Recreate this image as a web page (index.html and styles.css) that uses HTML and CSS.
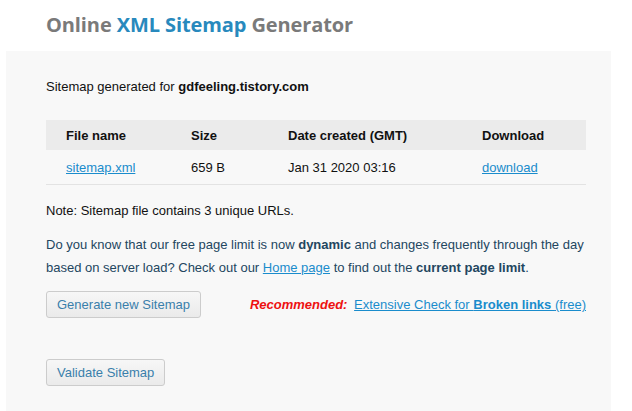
FILE: index.html
```html
<!DOCTYPE html>
<html>
<head>
<meta charset="utf-8">
<link rel="stylesheet" href="styles.css">
</head>
<body>
<h1 class="title">Online <span class="accent">XML Sitemap</span> Generator</h1>
<div class="panel">
  <p class="generated">Sitemap generated for <b>gdfeeling.tistory.com</b></p>
  <table class="files">
    <thead>
      <tr><th class="c1">File name</th><th class="c2">Size</th><th class="c3">Date created (GMT)</th><th class="c4">Download</th></tr>
    </thead>
    <tbody>
      <tr><td><a href="#">sitemap.xml</a></td><td>659 B</td><td>Jan 31 2020 03:16</td><td><a href="#">download</a></td></tr>
    </tbody>
  </table>
  <p class="note">Note: Sitemap file contains 3 unique URLs.</p>
  <p class="info">Do you know that our free page limit is now <b>dynamic</b> and changes frequently through the day based on server load? Check out our <a href="#">Home page</a> to find out the <b>current page limit</b>.</p>
  <div class="actions">
    <button class="btn">Generate new Sitemap</button>
    <div class="rec"><span class="rec-label">Recommended:</span> <a href="#">Extensive Check for <b>Broken links </b>(free)</a></div>
  </div>
  <div class="validate">
    <button class="btn">Validate Sitemap</button>
  </div>
</div>
</body>
</html>
```
FILE: styles.css
```css
html, body {
  margin: 0;
  padding: 0;
  background: #ffffff;
}
body {
  font-family: "Liberation Sans", Arial, sans-serif;
  font-size: 13px;
  color: #111;
}
.title {
  margin: 0;
  padding: 11px 0 0 46px;
  height: 51px;
  box-sizing: border-box;
  font-family: "Open Sans", sans-serif;
  font-weight: 700;
  font-size: 20px;
  line-height: 27px;
  color: #7a7a7a;
  letter-spacing: -0.1px;
}
.accent {
  color: #2889bd;
}
.panel {
  margin: 0 21px 0 6px;
  background: #f8f8f8;
  padding: 24px 25px 20px 40px;
  min-height: 316px;
}
.generated {
  margin: 0;
  line-height: 23px;
}
.files {
  margin-top: 22px;
  width: 100%;
  border-collapse: collapse;
}
.files th {
  background: #ebebeb;
  text-align: left;
  font-weight: 700;
  height: 30px;
  padding: 0 0 0 20px;
}
.files td {
  height: 34px;
  padding: 0 0 0 20px;
  border-bottom: 1px solid #e3e3e3;
}
.files .c1 { width: 105px; }
.files .c2 { width: 77px; }
.files .c3 { width: 174px; }
a {
  color: #1a8ccc;
  text-decoration: underline;
}
.note {
  margin: 14px 0 0;
  line-height: 23px;
}
.info {
  margin: 11px 0 0;
  line-height: 23px;
  color: #23465f;
}
.actions {
  margin-top: 12px;
  display: flex;
  align-items: center;
  justify-content: space-between;
}
.btn {
  font-family: "Liberation Sans", Arial, sans-serif;
  font-size: 13px;
  color: #3a7fab;
  background: linear-gradient(#f7f7f7, #eaeaea);
  border: 1px solid #cccccc;
  border-radius: 3px;
  height: 27px;
  padding: 0 10px;
  margin: 0;
}
.rec {
  font-size: 13px;
}
.rec-label {
  color: #ee1111;
  font-style: italic;
  font-weight: 700;
  margin-right: 3px;
}
.validate {
  margin-top: 41px;
}
```
